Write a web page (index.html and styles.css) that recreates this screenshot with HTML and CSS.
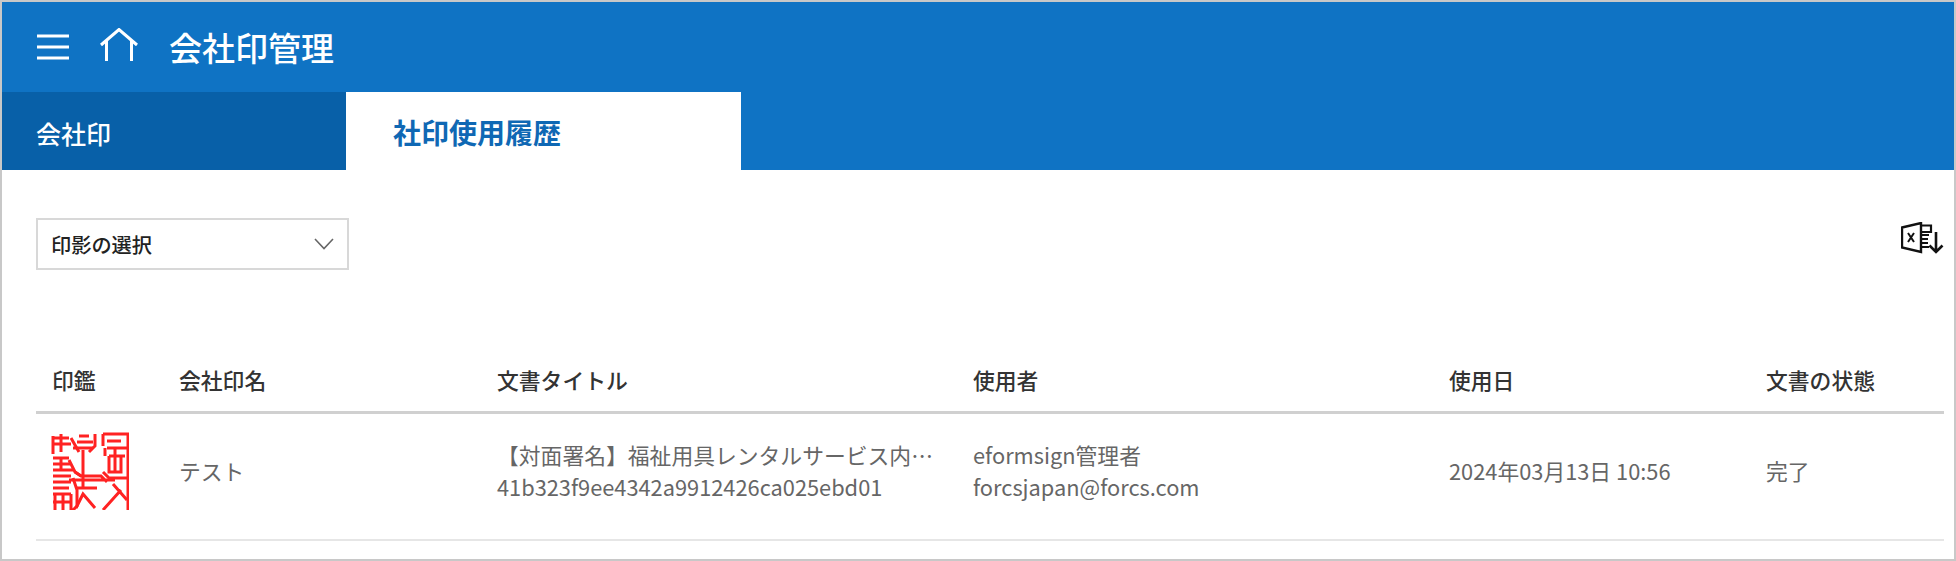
FILE: index.html
```html
<!DOCTYPE html>
<html lang="ja">
<head>
<meta charset="utf-8">
<title>会社印管理</title>
<link rel="stylesheet" href="styles.css">
</head>
<body>
<div class="frame">
  <header class="topbar">
    <svg class="menu-icon" width="32" height="26" viewBox="0 0 32 26" aria-hidden="true"><path d="M0 2H32M0 13H32M0 24H32" stroke="#fff" stroke-width="3" fill="none"/></svg>
    <svg class="home-icon" width="38" height="34" viewBox="0 0 38 34" aria-hidden="true"><path d="M1 17L19 1.5L37 17M6.5 33V13M31.5 33V13" stroke="#fff" stroke-width="3" fill="none"/></svg>
    <h1 class="page-title">会社印管理</h1>
  </header>
  <nav class="tabs">
    <a class="tab">会社印</a>
    <a class="tab tab-active">社印使用履歴</a>
  </nav>
  <main class="content">
    <div class="toolbar">
      <div class="select">
        <span>印影の選択</span>
        <svg width="20" height="12" viewBox="0 0 20 12" aria-hidden="true"><path d="M1 1L10 10.5L19 1" stroke="#666" stroke-width="1.6" fill="none"/></svg>
      </div>
      <svg class="excel-icon" width="44" height="32" viewBox="0 0 44 32" aria-hidden="true">
        <path d="M1 5.5L20 1V30L1 25.5Z" fill="#fff" stroke="#111" stroke-width="2.4"/>
        <path d="M7 11L13 20M13 11L7 20" stroke="#111" stroke-width="2" fill="none"/>
        <path d="M20 3.5H30V10H20M20 13H28M20 17H27M20 21H27M20 25H28" stroke="#111" stroke-width="2.2" fill="none"/>
        <path d="M35 10V30M28.5 23.5L35 30L41.5 23.5" stroke="#111" stroke-width="2.6" fill="none"/>
      </svg>
    </div>
    <table class="history">
      <colgroup>
        <col class="c1"><col class="c2"><col class="c3"><col class="c4"><col class="c5"><col class="c6">
      </colgroup>
      <thead>
        <tr><th>印鑑</th><th>会社印名</th><th>文書タイトル</th><th>使用者</th><th>使用日</th><th>文書の状態</th></tr>
      </thead>
      <tbody>
        <tr>
          <td>
            <svg class="seal" width="78" height="78" viewBox="0 0 78 78" aria-hidden="true">
              <g fill="none" stroke="#f22" stroke-width="3">
                <path d="M52 2H77V78M52 2V14"/>
                <path d="M56 9H70M56 16H76M54 16V24M58 24H74M58 24V40H70V24M64 16V40M52 40L58 46H76"/>
                <path d="M32 18V56M22 16H42M24 40L30 44H50L56 50M18 48H64"/>
                <path d="M25 76L32 62L44 76M26 56H46M52 78L70 58M62 52L76 68"/>
                <path d="M2 4V22M2 6H18M10 2V20M2 12H20M20 6L28 20M28 4H38M26 10H42M44 2V14L38 20"/>
                <path d="M2 26H18M2 32H20M18 28L24 40L30 44M2 38H22M2 44H20M10 26V38"/>
                <path d="M2 50H20M22 46L26 58V74L22 78M2 56H18M2 62H20M4 62V78M12 62V78M20 62V78M2 70H20"/>
              </g>
            </svg>
          </td>
          <td>テスト</td>
          <td><div class="line">【対面署名】福祉用具レンタルサービス内…</div><div class="line">41b323f9ee4342a9912426ca025ebd01</div></td>
          <td><div class="line">eformsign管理者</div><div class="line">forcsjapan@forcs.com</div></td>
          <td>2024年03月13日 10:56</td>
          <td>完了</td>
        </tr>
      </tbody>
    </table>
  </main>
</div>
</body>
</html>
```
FILE: styles.css
```css
* { box-sizing: border-box; }
html, body { margin: 0; padding: 0; background: #fff; }
body { font-family: "Noto Sans CJK JP", "Noto Sans", sans-serif; }
.frame {
  width: 1956px;
  height: 561px;
  border: 2px solid #c8c8c8;
  overflow: hidden;
  background: #fff;
}
.topbar {
  height: 90px;
  background: #0f73c4;
  display: flex;
  align-items: center;
  padding-left: 35px;
}
.menu-icon { display: block; }
.home-icon { display: block; margin-left: 31px; margin-top: -4px; }
.page-title {
  margin: 0 0 0 31px;
  font-size: 33px;
  font-weight: 500;
  color: #fff;
  line-height: 44px;
}
.tabs { height: 78px; display: flex; background: #0f73c4; }
.tab {
  width: 344px;
  background: #0860a8;
  color: #fff;
  font-size: 25px;
  font-weight: 500;
  line-height: 82px;
  padding-left: 34px;
}
.tab-active {
  width: 395px;
  background: #fff;
  color: #0f68b4;
  font-size: 28px;
  font-weight: 700;
  line-height: 80px;
  padding-left: 47px;
}
.content { padding: 48px 10px 0 34px; }
.toolbar {
  display: flex;
  justify-content: space-between;
  align-items: flex-start;
  height: 136px;
}
.select {
  width: 313px;
  height: 52px;
  border: 2px solid #d8d8d8;
  display: flex;
  align-items: center;
  justify-content: space-between;
  padding: 0 13px;
  font-size: 20.2px;
  font-weight: 500;
  color: #222;
}
.excel-icon { display: block; margin: 4px -1px 0 0; }
.history {
  width: 1908px;
  table-layout: fixed;
  border-collapse: collapse;
}
.c1 { width: 127px; }
.c2 { width: 318px; }
.c3 { width: 476px; }
.c4 { width: 476px; }
.c5 { width: 317px; }
.c6 { width: 194px; }
th {
  height: 58px;
  padding: 0 16px 6px;
  text-align: left;
  font-size: 21.8px;
  font-weight: 500;
  color: #333;
  border-bottom: 3px solid #d0d0d0;
}
td {
  height: 128px;
  padding: 0 16px 11px;
  font-size: 21.8px;
  color: #666;
  border-bottom: 2px solid #e6e6e6;
  vertical-align: middle;
}
.line { line-height: 32px; white-space: nowrap; }
.seal { display: block; margin-left: -1px; }
```
